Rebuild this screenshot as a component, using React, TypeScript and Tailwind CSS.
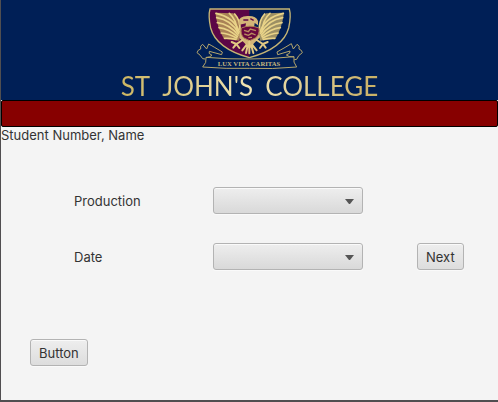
import { useId } from "react";

function Crest() {
  return (
    <svg viewBox="0 0 420 225" className="h-[75px] w-[140px]" fill="none" role="img" aria-label="St John's College crest">
      <path d="M208 27H90Q84 48 92 84Q108 145 208 173Z" fill="#5c0646" />
      <path d="M90 27H328Q334 48 326 84Q310 145 208 173Q108 145 92 84Q84 48 90 27Z" stroke="#c5b574" strokeWidth="4" />
      <path d="M106 38L160 40Q182 58 182 90L178 122L132 117Q112 84 106 38Z" fill="#a98256" />
      <path d="M312 38L258 40Q236 58 236 90L240 122L286 117Q306 84 312 38Z" fill="#9c8f64" />
      <g stroke="#e9d388" strokeWidth="5" strokeLinecap="round">
        <path d="M178 96Q163 52 108 40" />
        <path d="M176 100Q154 60 110 53" />
        <path d="M174 105Q149 73 112 68" />
        <path d="M172 110Q147 87 117 83" />
        <path d="M170 114Q145 101 124 99" />
        <path d="M168 118Q148 114 134 115" />
        <path d="M172 94Q169 58 148 40" />
        <path d="M180 88Q181 61 164 42" />
        <path d="M240 96Q255 52 310 40" />
        <path d="M242 100Q264 60 308 53" />
        <path d="M244 105Q269 73 306 68" />
        <path d="M246 110Q271 87 301 83" />
        <path d="M248 114Q273 101 294 99" />
        <path d="M250 118Q270 114 284 115" />
        <path d="M246 94Q249 58 270 40" />
        <path d="M238 88Q237 61 254 42" />
      </g>
      <path d="M176 66Q176 49 202 48Q228 46 234 63L234 76L224 69L222 83L236 88L240 112L222 130L209 147L194 130L178 114L180 88L196 80L198 70L176 75Z" fill="#d3b578" />
      <path d="M190 60H205M211 56L221 61" stroke="#5c0646" strokeWidth="4" />
      <path d="M184 84Q209 73 237 84Q240 105 226 114L209 122L192 114Q180 103 184 84Z" fill="#69083e" stroke="#ad8053" strokeWidth="3" />
      <path d="M192 91L205 95L211 87L228 92M193 102L205 106L215 100L227 105M205 113L216 112" stroke="#b98d60" strokeWidth="4" />
      <path d="M188 120L169 132L155 126M169 132L160 143M169 132L178 144M230 120L249 132L263 126M249 132L257 143M249 132L240 144M208 124V160M199 135L187 151M217 135L230 151M203 137L198 159M214 137L220 159" stroke="#e1c983" strokeWidth="6" strokeLinecap="round" />
      <g stroke="#b5a66c" strokeWidth="3" strokeLinejoin="round">
        <path d="M78 172Q145 178 208 177Q277 177 342 170Q338 187 350 201Q275 208 208 205Q139 207 68 201Q81 188 78 172Z" fill="#001f56" />
        <path d="M78 173Q91 171 96 166Q83 160 88 154L125 164L127 156Q99 139 86 132L80 147L68 133Q59 137 62 147Q53 149 51 158Q61 164 68 176L75 177" />
        <path d="M342 171Q325 171 319 165Q333 160 330 153L293 164L291 156Q318 141 334 131L340 147L351 133Q361 137 357 147Q366 150 367 158Q354 166 350 178L343 179" />
      </g>
      <text x="207" y="197" textAnchor="middle" fill="#c5b67d" fontFamily="Liberation Serif, serif" fontSize="20" fontWeight="700">LUX VITA CARITAS</text>
    </svg>
  );
}

function ComboRow({ label }: { label: string }) {
  const id = useId();
  return (
    <>
      <label htmlFor={id}>{label}</label>
      <div className="relative w-[150px]">
        <select
          id={id}
          className="block h-[27px] w-full appearance-none rounded-[3px] border border-[#b3b3b3] bg-linear-to-b from-[#eeeeee] to-[#d9d9d9] px-2 shadow-[inset_0_1px_0_#fafafa,0_1px_0_#fafafa]"
        >
          <option value=""></option>
        </select>
        <svg viewBox="0 0 9 5" className="pointer-events-none absolute top-3 right-[9px] h-[5px] w-[9px]" aria-hidden="true">
          <path d="M0 0H9L5 5H4Z" fill="#555555" />
        </svg>
      </div>
    </>
  );
}

function PushButton({ children }: { children: string }) {
  return (
    <button
      type="button"
      className="h-[27px] rounded-[3px] border border-[#b3b3b3] bg-linear-to-b from-[#eeeeee] to-[#dddddd] px-2 shadow-[inset_0_1px_0_#fafafa,0_1px_0_#fafafa]"
    >
      {children}
    </button>
  );
}

export default function App() {
  return (
    <main className="flex min-h-screen flex-col border-b-2 border-l border-[#504e50] bg-[#f4f4f4] font-['Inter','Liberation_Sans',sans-serif] text-[13px] leading-4 text-[#333333]">
      <header className="flex h-[100px] flex-col items-center bg-[#001f56]">
        <Crest />
        <h1 className="flex gap-3 bg-linear-to-r from-[#cdb662] via-[#efe3b2] to-[#c9b065] bg-clip-text font-['Lato','Liberation_Sans',sans-serif] text-[26px] leading-[22px] text-transparent">
          <span>ST</span> <span>JOHN&apos;S</span> <span>COLLEGE</span>
        </h1>
      </header>
      <div className="h-[27px] rounded-[2px] border border-black bg-[#870000]" />
      <p>Student Number, Name</p>
      <form className="mt-11 grid grid-cols-[139px_150px_auto] items-center gap-y-[29px] pl-[73px]">
        <ComboRow label="Production" />
        <span />
        <ComboRow label="Date" />
        <div className="pl-[54px]">
          <PushButton>Next</PushButton>
        </div>
      </form>
      <div className="mt-[69px] pb-[34px] pl-[29px]">
        <PushButton>Button</PushButton>
      </div>
    </main>
  );
}
